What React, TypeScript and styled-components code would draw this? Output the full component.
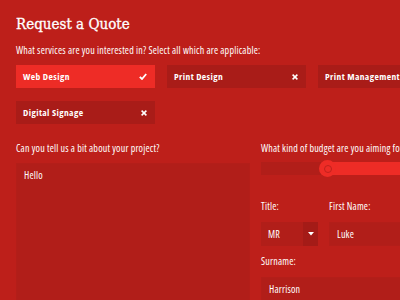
import styled, { createGlobalStyle } from "styled-components";

const GlobalStyle = createGlobalStyle`
  html, body {
    margin: 0;
    padding: 0;
    background: #bd1f1a;
    overflow: hidden;
  }
`;

const services = [
  { name: "Web Design", selected: true },
  { name: "Print Design", selected: false },
  { name: "Print Management", selected: false },
  { name: "Digital Signage", selected: false },
];

export default function App() {
  return (
    <>
      <GlobalStyle />
      <Page>
        <Title>Request a Quote</Title>
        <Question>What services are you interested in? Select all which are applicable:</Question>
        <Chips>
          {services.map((s) => (
            <Chip key={s.name} $selected={s.selected}>
              <span>{s.name}</span>
              {s.selected ? (
                <svg width="8" height="7" viewBox="0 0 8 7">
                  <path d="M0.8 3.8 L3 6 L7.2 1" stroke="#fff" strokeWidth="1.8" fill="none" />
                </svg>
              ) : (
                <svg width="6" height="6" viewBox="0 0 6 6">
                  <path d="M0.6 0.6 L5.4 5.4 M5.4 0.6 L0.6 5.4" stroke="#fff" strokeWidth="1.5" />
                </svg>
              )}
            </Chip>
          ))}
        </Chips>
        <Columns>
          <Column>
            <Label>Can you tell us a bit about your project?</Label>
            <TextArea defaultValue="Hello" />
          </Column>
          <Column>
            <Label>What kind of budget are you aiming for?</Label>
            <Slider>
              <TrackLow style={{ width: "66px" }} />
              <TrackHigh />
              <Handle style={{ left: "58px" }} />
            </Slider>
            <Row>
              <Field>
                <SmallLabel $first>Title:</SmallLabel>
                <Select>
                  <SelectValue>MR</SelectValue>
                  <SelectArrow>
                    <svg width="6" height="4" viewBox="0 0 6 4">
                      <path d="M0 0 H6 L3 3.5 Z" fill="#fff" />
                    </svg>
                  </SelectArrow>
                </Select>
              </Field>
              <Field>
                <SmallLabel $first>First Name:</SmallLabel>
                <Input defaultValue="Luke" $width="160px" />
              </Field>
            </Row>
            <Field>
              <SmallLabel>Surname:</SmallLabel>
              <Input defaultValue="Harrison" $width="234px" />
            </Field>
          </Column>
        </Columns>
      </Page>
    </>
  );
}

const Page = styled.div`
  width: 488px;
  padding: 13px 16px;
  font-family: "Open Sans", sans-serif;
  font-stretch: 80%;
  letter-spacing: 0.2px;
  color: #fff;
`;

const Title = styled.h1`
  margin: 0;
  font-family: "DejaVu Serif", serif;
  font-stretch: condensed;
  font-weight: normal;
  font-size: 15px;
  line-height: 22px;
  letter-spacing: 0;
  -webkit-text-stroke: 0.3px #fff;
`;

const Question = styled.p`
  margin: 8px 0 0;
  font-size: 10px;
  line-height: 14px;
`;

const Chips = styled.div`
  display: flex;
  flex-wrap: wrap;
  gap: 13px 12px;
  margin-top: 8px;
`;

const Chip = styled.div<{ $selected: boolean }>`
  width: 139px;
  height: 23px;
  box-sizing: border-box;
  padding: 0 8px 0 7px;
  display: flex;
  align-items: center;
  justify-content: space-between;
  background: ${(p) => (p.$selected ? "#ee2c26" : "#a91c18")};
  font-weight: bold;
  font-size: 9.5px;
  letter-spacing: 0.4px;
  white-space: nowrap;
`;

const Columns = styled.div`
  display: grid;
  grid-template-columns: 234px 234px;
  gap: 11px;
  margin-top: 17px;
`;

const Column = styled.div`
  display: flex;
  flex-direction: column;
`;

const Label = styled.div`
  font-size: 10px;
  line-height: 14px;
  white-space: nowrap;
`;

const TextArea = styled.textarea`
  margin-top: 8px;
  height: 160px;
  box-sizing: border-box;
  padding: 4px 7px;
  border: 1px solid #b31e19;
  background: #b11e19;
  color: #fff;
  font-family: "Open Sans", sans-serif;
  font-stretch: 80%;
  letter-spacing: 0.2px;
  font-size: 10px;
  resize: none;
  outline: none;
`;

const Slider = styled.div`
  position: relative;
  margin-top: 7px;
  height: 13px;
  display: flex;
`;

const TrackLow = styled.div`
  background: #b11e19;
  height: 100%;
`;

const TrackHigh = styled.div`
  flex: 1;
  background: #ee2c26;
  height: 100%;
`;

const Handle = styled.div`
  position: absolute;
  top: -2px;
  width: 17px;
  height: 17px;
  border-radius: 50%;
  background: #ee2c26;
  display: flex;
  align-items: center;
  justify-content: center;
  &::after {
    content: "";
    width: 6px;
    height: 6px;
    border-radius: 50%;
    border: 1.5px solid #c0221d;
  }
`;

const Row = styled.div`
  display: flex;
  gap: 11px;
`;

const Field = styled.div`
  display: flex;
  flex-direction: column;
`;

const SmallLabel = styled.div<{ $first?: boolean }>`
  font-size: 10px;
  line-height: 14px;
  margin: ${(p) => (p.$first ? "24px" : "8px")} 0 9px;
`;

const Select = styled.div`
  width: 57px;
  height: 24px;
  display: flex;
  background: #b11e19;
`;

const SelectValue = styled.div`
  flex: 1;
  display: flex;
  align-items: center;
  padding-left: 7px;
  font-size: 10px;
`;

const SelectArrow = styled.div`
  width: 15px;
  display: flex;
  align-items: center;
  justify-content: center;
  background: #a41b17;
`;

const Input = styled.input<{ $width: string }>`
  width: ${(p) => p.$width};
  height: 24px;
  box-sizing: border-box;
  padding: 0 7px;
  border: 1px solid #b31e19;
  background: #b11e19;
  color: #fff;
  font-family: "Open Sans", sans-serif;
  font-stretch: 80%;
  letter-spacing: 0.2px;
  font-size: 10px;
  outline: none;
`;
